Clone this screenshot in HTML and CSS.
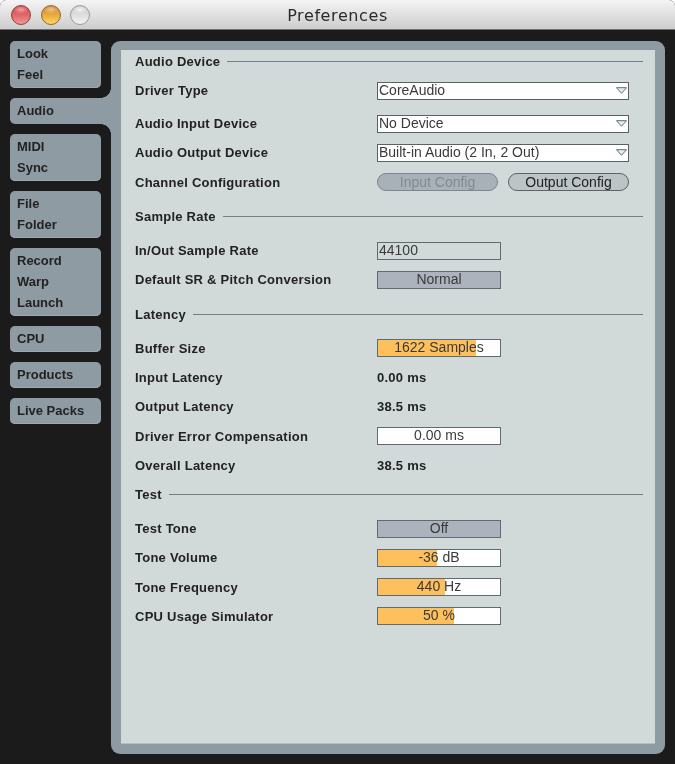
FILE: index.html
```html
<html>

<head>
    <title>Preferences</title>
    <link rel="stylesheet" href="styles.css">
</head>

<body>
    <div class="window">
        <div class="titlebar">
            <div class="lights">
                <span class="light red"></span>
                <span class="light yellow"></span>
                <span class="light grey"></span>
            </div>
            <div class="title">Preferences</div>
        </div>

        <div class="content">
            <div class="tabs">
                <div class="tab"><div>Look</div><div>Feel</div></div>
                <div class="tab active"><div>Audio</div></div>
                <div class="tab"><div>MIDI</div><div>Sync</div></div>
                <div class="tab"><div>File</div><div>Folder</div></div>
                <div class="tab"><div>Record</div><div>Warp</div><div>Launch</div></div>
                <div class="tab"><div>CPU</div></div>
                <div class="tab"><div>Products</div></div>
                <div class="tab"><div>Live Packs</div></div>
            </div>

            <div class="panel">
                <div class="sheet">
                    <div class="section first">
                        <div class="heading">Audio Device</div>
                        <div class="row">
                            <label>Driver Type</label>
                            <div class="select"><span>CoreAudio</span>
                                <svg width="11" height="7" viewBox="0 0 11 7"><path d="M0.5 0.7H10.5L5.5 6.3Z" fill="#e6ecec" stroke="#5f6b72"/></svg>
                            </div>
                        </div>
                        <div class="row spaced">
                            <label>Audio Input Device</label>
                            <div class="select"><span>No Device</span>
                                <svg width="11" height="7" viewBox="0 0 11 7"><path d="M0.5 0.7H10.5L5.5 6.3Z" fill="#e6ecec" stroke="#5f6b72"/></svg>
                            </div>
                        </div>
                        <div class="row">
                            <label>Audio Output Device</label>
                            <div class="select"><span>Built-in Audio (2 In, 2 Out)</span>
                                <svg width="11" height="7" viewBox="0 0 11 7"><path d="M0.5 0.7H10.5L5.5 6.3Z" fill="#e6ecec" stroke="#5f6b72"/></svg>
                            </div>
                        </div>
                        <div class="row">
                            <label>Channel Configuration</label>
                            <div class="buttons">
                                <div class="pill off">Input Config</div>
                                <div class="pill">Output Config</div>
                            </div>
                        </div>
                    </div>

                    <div class="section">
                        <div class="heading">Sample Rate</div>
                        <div class="row">
                            <label>In/Out Sample Rate</label>
                            <div class="field plain">44100</div>
                        </div>
                        <div class="row">
                            <label>Default SR &amp; Pitch Conversion</label>
                            <div class="field toggle">Normal</div>
                        </div>
                    </div>

                    <div class="section">
                        <div class="heading">Latency</div>
                        <div class="row">
                            <label>Buffer Size</label>
                            <div class="field"><div class="fill" style="width: 80%"></div><span>1622 Samples</span></div>
                        </div>
                        <div class="row">
                            <label>Input Latency</label>
                            <div class="readout">0.00 ms</div>
                        </div>
                        <div class="row">
                            <label>Output Latency</label>
                            <div class="readout">38.5 ms</div>
                        </div>
                        <div class="row">
                            <label>Driver Error Compensation</label>
                            <div class="field"><span>0.00 ms</span></div>
                        </div>
                        <div class="row">
                            <label>Overall Latency</label>
                            <div class="readout">38.5 ms</div>
                        </div>
                    </div>

                    <div class="section last">
                        <div class="heading">Test</div>
                        <div class="row">
                            <label>Test Tone</label>
                            <div class="field toggle">Off</div>
                        </div>
                        <div class="row">
                            <label>Tone Volume</label>
                            <div class="field"><div class="fill" style="width: 48%"></div><span>-36 dB</span></div>
                        </div>
                        <div class="row">
                            <label>Tone Frequency</label>
                            <div class="field"><div class="fill" style="width: 55%"></div><span>440 Hz</span></div>
                        </div>
                        <div class="row">
                            <label>CPU Usage Simulator</label>
                            <div class="field"><div class="fill" style="width: 62%"></div><span>50 %</span></div>
                        </div>
                    </div>
                </div>
            </div>
        </div>
    </div>
</body>

</html>
```

FILE: styles.css
```css
html, body{
    margin: 0;
    height: 100%;
    background: #fff;
}

body{
    font-family: "Liberation Sans", Arial, sans-serif;
    font-size: 14px;
    color: #222;
    overflow: hidden;
}

.window{
    display: flex;
    flex-direction: column;
    width: 675px;
    height: 764px;
    border-radius: 6px 6px 0 0;
    overflow: hidden;
    background: #1b1b1b;
    filter: blur(0.4px);
}

.titlebar{
    position: relative;
    display: flex;
    align-items: center;
    justify-content: center;
    height: 29px;
    flex: none;
    background: linear-gradient(#f4f4f4, #cdcdcd);
    border-bottom: 1px solid #6f6f6f;
}

.title{
    font-family: "DejaVu Sans", sans-serif;
    font-size: 16px;
    letter-spacing: 0.6px;
    color: #2a2a2a;
    padding-top: 1px;
}

.lights{
    position: absolute;
    left: 11px;
    top: 5px;
    display: flex;
    gap: 9.5px;
}

.light{
    width: 20px;
    height: 20px;
    border-radius: 50%;
    box-sizing: border-box;
    border: 1.5px solid #9a9a9a;
}

.red{
    border-color: #96393d;
    background:
        radial-gradient(ellipse 7px 4px at 50% 20%, #eda3a5, transparent),
        linear-gradient(#d05257, #e4686b 55%, #eb9c9c);
}

.yellow{
    border-color: #93652f;
    background:
        radial-gradient(ellipse 7px 4px at 50% 20%, #eec48e, transparent),
        linear-gradient(#c98b3e, #eba93f 50%, #ffd75f);
}

.grey{
    background:
        radial-gradient(ellipse 7px 4px at 50% 20%, #f4f4f4, transparent),
        linear-gradient(#c9c9c9, #dedede 50%, #f2f2f2);
}

.content{
    display: flex;
    flex: 1;
    padding: 11px 10px 10px 10px;
    min-height: 0;
}

.tabs{
    display: flex;
    flex-direction: column;
    gap: 10px;
    width: 101px;
    flex: none;
}

.tab{
    position: relative;
    margin-right: 10px;
    padding: 2px 3px 3px 7px;
    background: #8f9ba3;
    border-radius: 5px;
    box-shadow: inset 0 -1px #9ea9af;
    font-weight: bold;
    font-size: 13px;
    line-height: 21px;
    color: #222;
}

.tab.active{
    margin-right: 0;
    border-radius: 5px 0 0 5px;
    box-shadow: none;
}

/* concave corners where the tab runs into the panel */
.tab.active::before, .tab.active::after{
    content: "";
    position: absolute;
    right: 0;
    width: 10px;
    height: 10px;
}

.tab.active::before{
    bottom: 100%;
    background: radial-gradient(circle at 0 0, transparent 9.5px, #8f9ba3 10px);
}

.tab.active::after{
    top: 100%;
    background: radial-gradient(circle at 0 100%, transparent 9.5px, #8f9ba3 10px);
}

.panel{
    flex: 1;
    display: flex;
    padding: 9px 10px 10px 10px;
    background: #8f9ba3;
    border-radius: 9px;
}

.sheet{
    flex: 1;
    padding: 0 12px 0 14px;
    background: #d2dad9;
    border-bottom: 1px solid #b4bfc0;
    box-sizing: border-box;
}

.section{
    margin-top: 9px;
}

.section.first{
    margin-top: 0;
}

.section.last{
    margin-top: 4px;
}

.heading{
    display: flex;
    align-items: center;
    gap: 7px;
    height: 22px;
    margin-bottom: 8px;
    font-weight: bold;
    font-size: 13px;
    letter-spacing: 0.25px;
}

.section.first .heading{
    margin-bottom: 4px;
}

.heading::after{
    content: "";
    flex: 1;
    height: 1px;
    background: #727d85;
}

.row{
    display: grid;
    grid-template-columns: 242px 1fr;
    align-items: center;
    height: 29.3px;
}

.row.spaced{
    margin-top: 3.7px;
}

.row label{
    font-weight: bold;
    font-size: 13px;
    letter-spacing: 0.25px;
}

.select{
    display: flex;
    align-items: center;
    justify-content: space-between;
    box-sizing: border-box;
    width: 252px;
    height: 18px;
    padding: 0 1px 0 1px;
    background: #fff;
    border: 1.5px solid #566168;
    color: #3a3a3a;
    line-height: 15px;
}

.buttons{
    display: flex;
    justify-content: space-between;
    width: 252px;
}

.pill{
    box-sizing: border-box;
    width: 121px;
    height: 18px;
    border: 1px solid #59646b;
    border-radius: 9px;
    background: #bcc4c6;
    text-align: center;
    line-height: 16px;
    color: #222;
}

.pill.off{
    background: #a9b1b8;
    border-color: #7b868d;
    color: #7f8b92;
}

.field{
    position: relative;
    box-sizing: border-box;
    width: 124px;
    height: 18px;
    background: #fff;
    border: 1.5px solid #5f6b72;
    text-align: center;
    line-height: 15px;
    color: #3a3a3a;
    white-space: nowrap;
}

.field span{
    position: relative;
}

.fill{
    position: absolute;
    left: 0;
    top: 0;
    bottom: 0;
    background: #fdc05c;
}

.field.plain{
    background: #d2dad9;
    text-align: left;
    padding-left: 1px;
}

.field.toggle{
    background: #adb3bc;
}

.readout{
    font-weight: bold;
    font-size: 13px;
    letter-spacing: 0.25px;
    color: #222;
}
```
